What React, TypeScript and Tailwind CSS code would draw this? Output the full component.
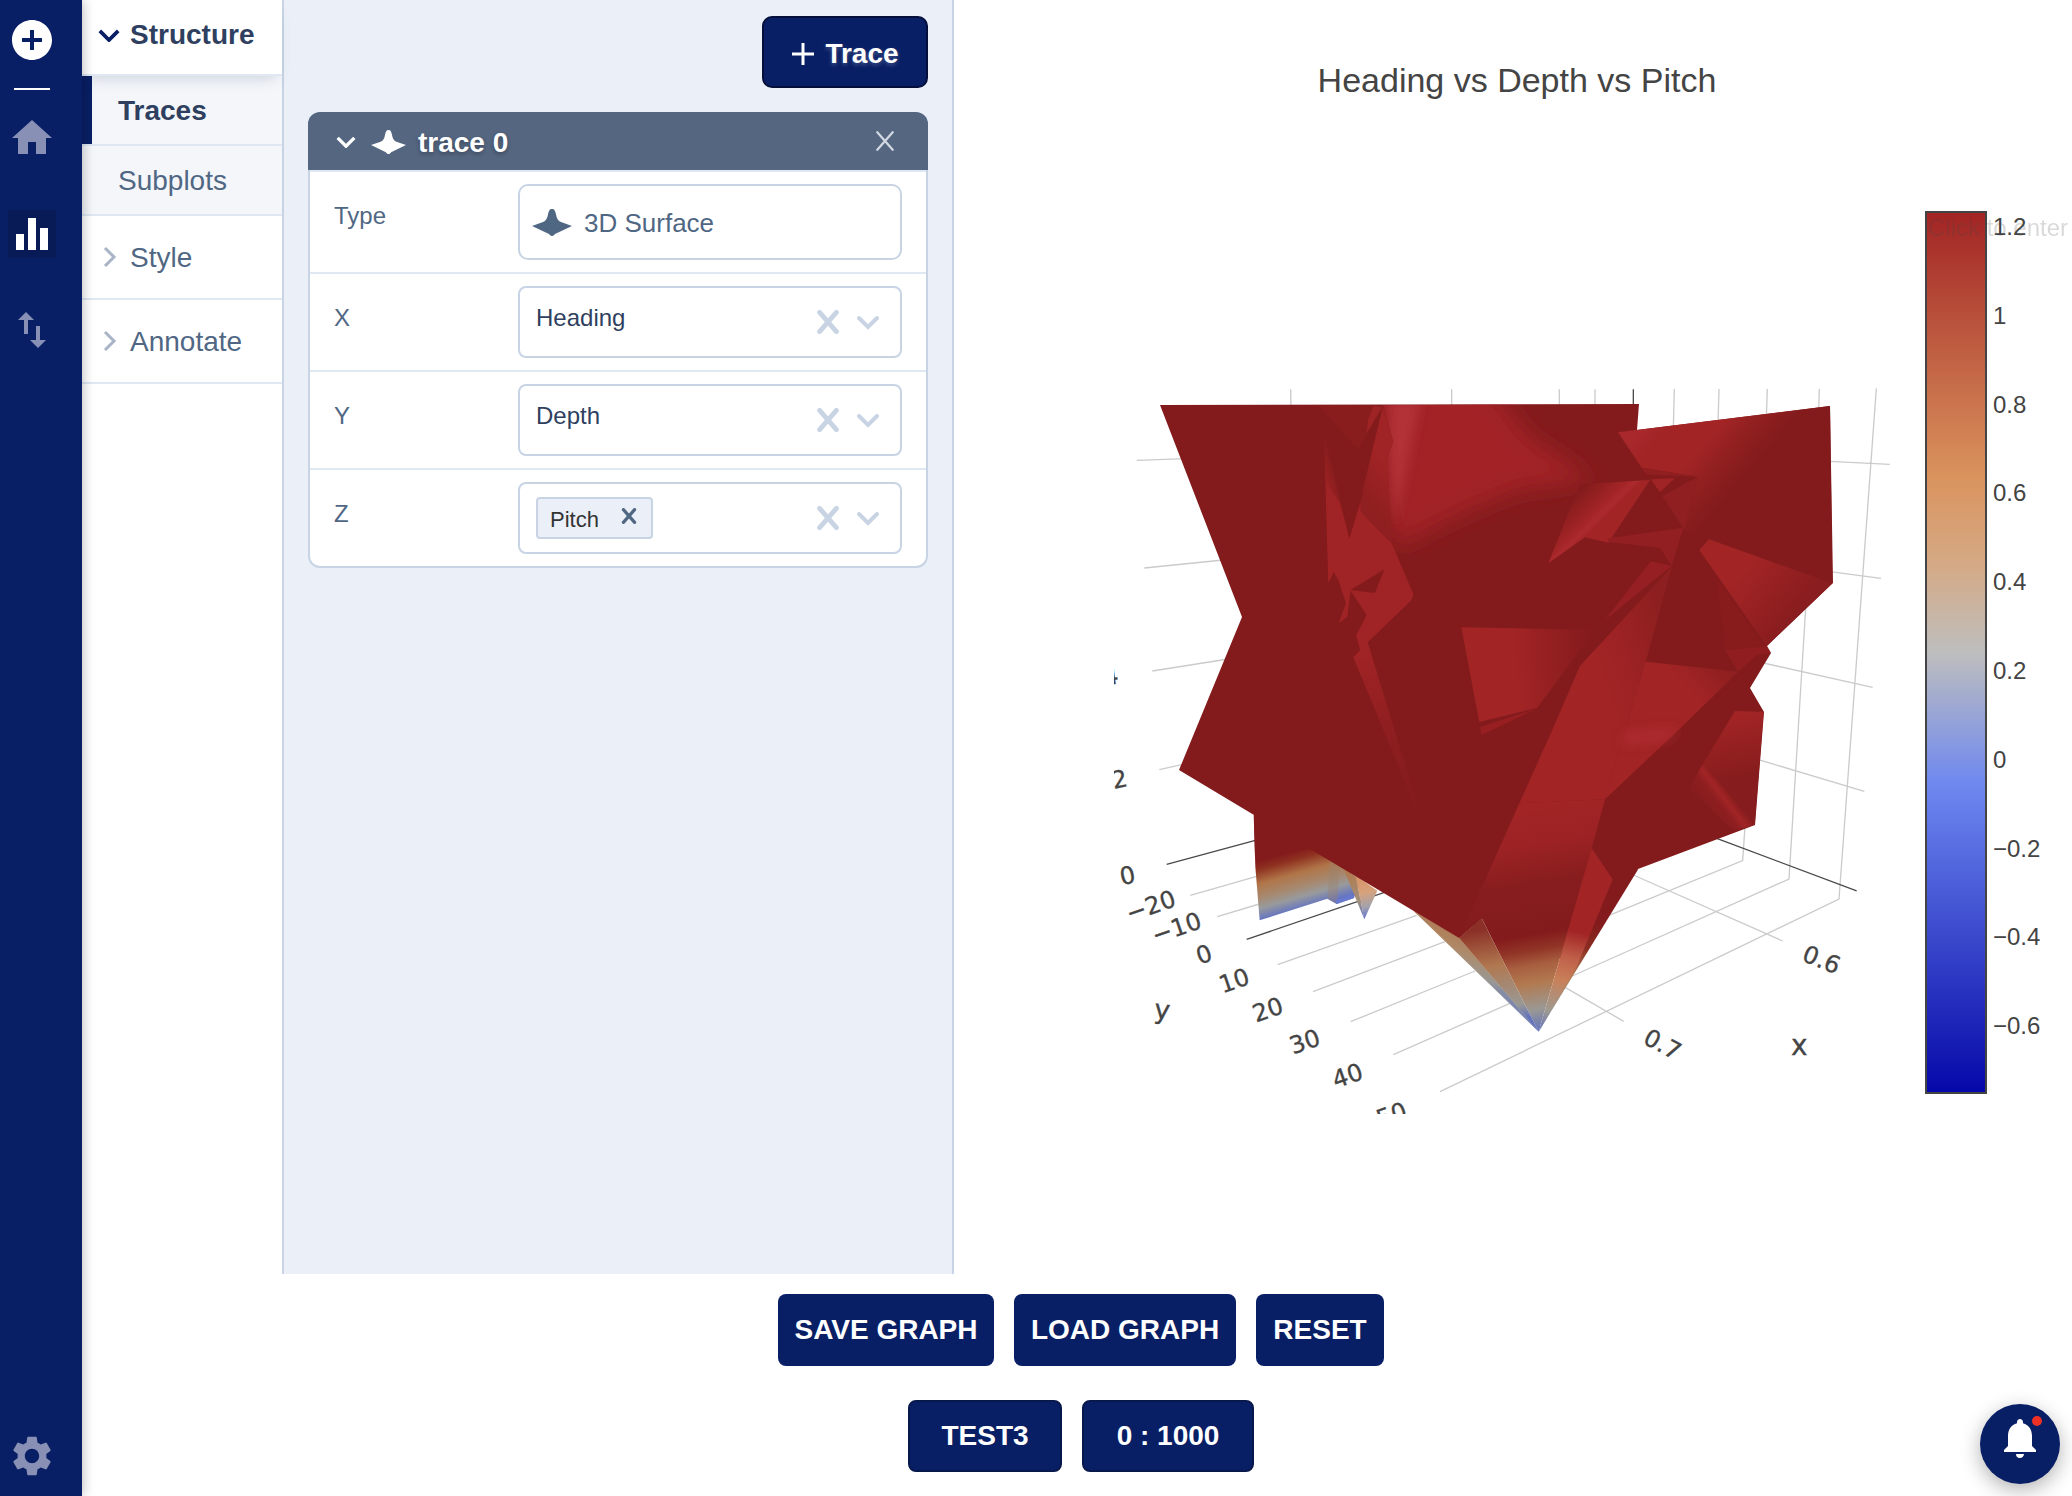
import React from "react";
import {
  MdAddCircle,
  MdHome,
  MdEqualizer,
  MdSwapVert,
  MdSettings,
  MdNotifications,
} from "react-icons/md";

const SURFACE_PATH =
  "M20 0C22.6 0 23.2 2.5 24 7C24.8 12 26 15 29 16.5L40 21.4L23 31.5C22 33 21.5 34 20 34C18.500 34 18 33 17 31.5L0 21.4L11 16.5C14 15 15.200 12 16 7C16.800 2.500 17.400 0 20 0Z";

function SurfaceIcon({ className }: { className: string }) {
  return (
    <svg viewBox="0 0 40 34" preserveAspectRatio="none" className={className} fill="currentColor" aria-hidden="true">
      <path d={SURFACE_PATH} />
    </svg>
  );
}

function Cross({ className, width }: { className: string; width: number }) {
  return (
    <svg viewBox="0 0 20 20" className={className} fill="none" stroke="currentColor" strokeWidth={width} strokeLinecap="round" aria-hidden="true">
      <path d="M3 2L17 18M17 2L3 18" />
    </svg>
  );
}

function Chevron({ className, width }: { className: string; width: number }) {
  return (
    <svg viewBox="0 0 24 14" className={className} fill="none" stroke="currentColor" strokeWidth={width} aria-hidden="true">
      <path d="M2 2L12 12L22 2" />
    </svg>
  );
}

function ChevronRight() {
  return (
    <svg viewBox="0 0 14 22" className="ml-[21px] mr-[13px] h-[22px] w-[14px] shrink-0 text-[#a9b4c6]" fill="none" stroke="currentColor" strokeWidth="3" aria-hidden="true">
      <path d="M2 2L11 11L2 20" />
    </svg>
  );
}

function Rail() {
  return (
    <nav className="relative z-10 flex w-[82px] shrink-0 flex-col bg-[#091f65] pl-2 pt-4 text-white shadow-[0_0_12px_rgba(0,0,0,0.3)]">
      <button type="button" aria-label="New" className="size-12"><MdAddCircle className="size-12" /></button>
      <hr className="ml-[6px] mt-6 h-[2px] w-9 border-0 bg-white" />
      <button type="button" aria-label="Home" className="mt-6 size-12 text-[#8890b5]"><MdHome className="size-12" /></button>
      <button type="button" aria-label="Charts" className="mt-12 size-12 bg-[#091b57]"><MdEqualizer className="size-12" /></button>
      <button type="button" aria-label="Transfer" className="mt-12 size-12 text-[#8890b5]"><MdSwapVert className="size-12" /></button>
      <button type="button" aria-label="Settings" className="mb-4 mt-auto size-12 text-[#8890b5]"><MdSettings className="size-12" /></button>
    </nav>
  );
}

function StructureMenu() {
  return (
    <div className="w-[202px] shrink-0 border-r-2 border-[#c8d4e3] bg-white text-[28px] text-[#506784]">
      <button type="button" className="relative flex h-[76px] w-full items-center border-b-2 border-[#dfe8f3] bg-white pb-1 font-bold text-[#2f3f60] shadow-[0_8px_14px_-6px_rgba(42,63,95,0.2)]">
        <Chevron width={4} className="ml-4 mr-[10px] h-[13px] w-[22px] text-[#091f65]" />
        <span>Structure</span>
      </button>
      <button type="button" className="flex h-[70px] w-full items-center border-b-2 border-[#dfe8f3] bg-[#f4f6fa] font-bold text-[#2f3f60]">
        <span className="h-full w-[10px] bg-[#091f65]" />
        <span className="ml-[26px] pt-[2px]">Traces</span>
      </button>
      <button type="button" className="flex h-[70px] w-full items-center border-b-2 border-[#dfe8f3] bg-[#f4f6fa] pl-9 pt-[2px]">Subplots</button>
      <button type="button" className="flex h-[84px] w-full items-center border-b-2 border-[#dfe8f3]"><ChevronRight /><span className="pt-[2px]">Style</span></button>
      <button type="button" className="flex h-[84px] w-full items-center border-b-2 border-[#dfe8f3]"><ChevronRight /><span className="pt-[2px]">Annotate</span></button>
    </div>
  );
}

function Row({ id, label, children }: { id: string; label: string; children: React.ReactNode }) {
  return (
    <div className="flex items-start border-t-2 border-[#dfe8f3] px-6 py-3">
      <label htmlFor={id} className="w-[184px] shrink-0 pt-4 text-2xl text-[#506784]">{label}</label>
      {children}
    </div>
  );
}

function Indicators({ label }: { label: string }) {
  return (
    <>
      <button type="button" aria-label={"Clear " + label} className="mr-4 shrink-0 text-[#c8d4e3]"><Cross width={4} className="size-6" /></button>
      <svg viewBox="0 0 26 16" className="pointer-events-none mr-[18px] h-4 w-[26px] shrink-0 text-[#c8d4e3]" fill="none" stroke="currentColor" strokeWidth="4" strokeLinecap="round" aria-hidden="true">
        <path d="M3 4L12 13L21 4" />
      </svg>
    </>
  );
}

function Picker({ id, value }: { id: string; value: string }) {
  return (
    <div className="flex h-[72px] min-w-0 flex-1 items-center rounded-lg border-2 border-[#c8d4e3] bg-white">
      <select id={id} defaultValue={value} className="h-full min-w-0 flex-1 appearance-none bg-transparent pb-2 pl-4 text-2xl text-[#2f3f60] outline-none">
        <option>{value}</option>
      </select>
      <Indicators label={value} />
    </div>
  );
}

function TracePanel() {
  return (
    <section className="w-[670px] shrink-0 border-r-2 border-[#c8d4e3] bg-[#ebf0f8] px-6 pt-4">
      <button type="button" className="ml-auto flex h-[72px] w-[166px] items-center justify-center gap-[10px] rounded-[10px] border-2 border-[#040f3c] bg-[#091f65] pt-1 text-[28px] font-bold text-white [text-shadow:0_2px_4px_rgba(255,255,255,0.25)]">
        <svg viewBox="0 0 24 24" className="size-6" stroke="currentColor" strokeWidth="3" aria-hidden="true"><path d="M1 12H23M12 1V23" /></svg>
        Trace
      </button>
      <div className="mt-6">
        <header className="flex h-[58px] items-center rounded-t-xl bg-[#546680] text-white [text-shadow:0_2px_4px_rgba(0,0,0,0.3)]">
          <Chevron width={4} className="ml-7 mt-[2px] h-[12px] w-5" />
          <SurfaceIcon className="ml-[15px] mt-[2px] h-6 w-[35px]" />
          <span className="ml-3 pt-1 text-[28px] font-bold">trace 0</span>
          <button type="button" aria-label="Remove trace 0" className="ml-auto mr-8 text-[#d3d9e2]"><Cross width={2} className="size-[22px]" /></button>
        </header>
        <div className="rounded-b-xl border-2 border-t-0 border-[#c8d4e3] bg-white">
          <Row id="type" label="Type">
            <button id="type" type="button" className="flex h-[76px] min-w-0 flex-1 items-center rounded-[10px] border-2 border-[#c8d4e3] bg-white pl-3 text-[26px] text-[#506784]">
              <SurfaceIcon className="mr-3 h-[27px] w-10" /><span className="pt-[2px]">3D Surface</span>
            </button>
          </Row>
          <Row id="x" label="X"><Picker id="x" value="Heading" /></Row>
          <Row id="y" label="Y"><Picker id="y" value="Depth" /></Row>
          <Row id="z" label="Z">
            <div className="flex h-[72px] min-w-0 flex-1 items-center rounded-lg border-2 border-[#c8d4e3] bg-white pl-4">
              <span className="flex h-[42px] shrink-0 items-center rounded-sm border-2 border-[#c8d4e3] bg-[#ebf0f8] pl-3 text-[22px] text-[#333]">
                <span className="pt-[2px]">Pitch</span>
                <button type="button" aria-label="Remove Pitch" className="ml-[22px] mr-[14px] text-[#506784]"><Cross width={4} className="mb-1 size-4" /></button>
              </span>
              <input id="z" type="text" className="h-full w-0 min-w-0 flex-1 bg-transparent text-2xl outline-none" />
              <Indicators label="Pitch" />
            </div>
          </Row>
        </div>
      </div>
    </section>
  );
}

/* Each tile below is drawn in its own 3x coordinate space. */
const TILE_A = "translate(1100 370) scale(0.33333)";
const TILE_B = "translate(1480 370) scale(0.33333)";
const TILE_C = "translate(1480 700) scale(0.33333)";
const TILE_D = "translate(1100 700) scale(0.33333)";

const DARK = "#831b1c";
const LIT = "#a22425";

type Stop = [number, string];

function Grad({ id, v, stops }: { id: string; v: [number, number, number, number]; stops: Stop[] }) {
  return (
    <linearGradient id={id} gradientUnits="userSpaceOnUse" x1={v[0]} y1={v[1]} x2={v[2]} y2={v[3]}>
      {stops.map(([o, c]) => <stop key={o} offset={o} stopColor={c} />)}
    </linearGradient>
  );
}

const yTicks: [string, number, number][] = [
  ["−20", 152, 617], ["−10", 229, 683], ["0", 312, 762], ["10", 402, 841],
  ["20", 503, 928], ["30", 614, 1024], ["40", 742, 1126], ["50", 874, 1243],
];

const barTicks = ["1.2", "1", "0.8", "0.6", "0.4", "0.2", "0", "−0.2", "−0.4", "−0.6"];

function TickText({ x, y, r, size = 72, children }: { x: number; y: number; r: number; size?: number; children: string }) {
  return (
    <text transform={`translate(${x} ${y}) rotate(${r})`} fontSize={size} textAnchor="middle" dy={size * 0.36} fill="#444" stroke="#444" strokeWidth="1">{children}</text>
  );
}

function Plot() {
  return (
    <svg viewBox="954 160 1118 1114" className="block w-full" role="img" aria-label="3D surface of heading, depth and pitch">
      <defs>
        <clipPath id="scene"><rect x="1114" y="160" width="790" height="954" /></clipPath>
        <clipPath id="backFace"><path d="M848 106L1617 102L1600 400L1400 600L876 545L862 260L880 215Z" /></clipPath>
        <filter id="soft" x="-20%" y="-20%" width="140%" height="140%"><feGaussianBlur stdDeviation="34" /></filter>
        <filter id="softer" x="-60%" y="-60%" width="220%" height="220%"><feGaussianBlur stdDeviation="16" /></filter>
        <linearGradient id="scale" x1="0" y1="0" x2="0" y2="1">
          <stop offset="0" stopColor="#a22424" />
          <stop offset="0.3" stopColor="#da935d" />
          <stop offset="0.4" stopColor="#d5aa85" />
          <stop offset="0.5" stopColor="#bebebe" />
          <stop offset="0.65" stopColor="#6e88f0" />
          <stop offset="1" stopColor="#0508a8" />
        </linearGradient>
        <Grad id="gBlade" v={[685, 400, 735, 385]} stops={[[0, LIT], [1, DARK]]} />
        <Grad id="gMid" v={[780, 380, 870, 300]} stops={[[0, "#8f1f20"], [1, "#a02325"]]} />
        <Grad id="gStrip" v={[800, 850, 960, 1330]} stops={[[0, "#a02325"], [0.5, "#8e1e20"], [1, DARK]]} />
        <Grad id="gSquare" v={[1250, 900, 1470, 890]} stops={[[0, LIT], [1, "#851b1d"]]} />
        <Grad id="gTop" v={[500, 160, 790, 410]} stops={[[0, "#a8282c"], [0.15, LIT], [0.45, LIT], [0.65, "#901f20"], [0.85, DARK], [1, DARK]]} />
        <Grad id="gDiag" v={[268, 390, 400, 525]} stops={[[0, DARK], [0.4, LIT], [0.52, "#ac2a2e"], [0.6, LIT], [1, LIT]]} />
        <Grad id="gCentre" v={[360, 900, 570, 830]} stops={[[0, LIT], [0.4, "#9c2224"], [1, "#8e1f20"]]} />
        <Grad id="gRight" v={[560, 1000, 700, 860]} stops={[[0, LIT], [0.4, LIT], [1, "#8f1f20"]]} />
        <Grad id="gEast" v={[750, 660, 900, 780]} stops={[[0, LIT], [1, "#8a1d1f"]]} />
        <Grad id="gFar" v={[627, 265, 750, 170]} stops={[[0, "#861c1d"], [0.28, "#8e1e20"], [0.42, LIT], [0.58, "#871c1d"], [1, "#951f21"]]} />
        <Grad id="gFarTop" v={[760, 50, 800, 230]} stops={[[0, LIT], [1, "#861c1d"]]} />
        <Grad id="gCone" v={[90, 340, 200, 990]} stops={[[0, LIT], [0.16, "#9c2224"], [0.34, "#871d1e"], [0.56, "#831b1c"], [0.63, "#913426"], [0.7, "#a85f40"], [0.78, "#b27a50"], [0.9, "#9a9894"], [1, "#6373bb"]]} />
        <Grad id="gConeEdge" v={[300, 500, 190, 995]} stops={[[0, LIT], [0.38, LIT], [0.54, "#c0604a"], [0.68, "#c88058"], [0.87, "#a09a90"], [1, "#6373bb"]]} />
        <Grad id="gConeRight" v={[390, 520, 180, 995]} stops={[[0, DARK], [0.3, DARK], [0.45, "#8a2c22"], [0.62, "#b07850"], [0.86, "#9a9894"], [1, "#6373bb"]]} />
        <Grad id="gConeLeft" v={[50, 680, 100, 960]} stops={[[0, "#8c3027"], [0.4, "#b07850"], [0.85, "#9a9894"], [1, "#6373bb"]]} />
        <Grad id="gConeUnder" v={[20, 720, -30, 830]} stops={[[0, "#a96c49"], [0.5, "#b18660"], [0.9, "#9a9894"], [1, "#7d88aa"]]} />
        <Grad id="gConeBlue" v={[-100, 700, 176, 995]} stops={[[0, "#b28a66"], [0.5, "#9a9894"], [0.8, "#7c86b0"], [1, "#6373bb"]]} />
        <Grad id="gWest" v={[485, 480, 533, 650]} stops={[[0, DARK], [0.14, "#8e3020"], [0.38, "#b07548"], [0.62, "#a68a72"], [0.78, "#989a9c"], [1, "#5f70c6"]]} />
        <Grad id="gSpike" v={[760, 520, 793, 658]} stops={[[0, "#d98f60"], [0.45, "#d7a27c"], [0.75, "#a3a3ac"], [1, "#5f70d0"]]} />
        <Grad id="gSpikeLeft" v={[750, 520, 793, 658]} stops={[[0, "#b07a50"], [0.6, "#a3917c"], [1, "#5f70d0"]]} />
      </defs>

      <g clipPath="url(#scene)" fontFamily='"DejaVu Sans", Verdana, sans-serif'>
        <g fill="none" stroke="#cbcbcb" strokeWidth="4">
          <path transform={TILE_A} d="M110 271L260 266M133 594L370 570M157 903L385 867M572 58L573 110M1055 58V110" />
          <path transform={TILE_B} d="M238 58V105M345 58V105M583 57L580 175M717 57L714 160M862 57L859 140M1018 57L1016 120M1189 55L1121 990M1050 274L1229 283M1050 605L1203 625M850 879L1178 952M978 700L960 990" />
          <path transform={TILE_C} d="M960 0L927 537L270 831M1121 0L1077 597L-120 1175M795 380L788 482L380 649M835 179L1153 274M460 525L908 723M255 862L431 964M-260 1064L90 910" />
          <path transform={TILE_D} d="M178 209L245 194M271 586L470 529M352 650L478 612M533 794L950 646M639 875L1035 725M752 965L1125 813" />
        </g>
        <g fill="none" stroke="#4a4a4a" strokeWidth="4">
          <path transform={TILE_B} d="M460 58V110" />
          <path transform={TILE_C} d="M710 415L1130 573" />
          <path transform={TILE_D} d="M200 493L466 421M440 718L860 575" />
        </g>

        <g transform={TILE_D}>
          <path d="M461 345L466 500L479 661L682 596L710 612L762 594L780 540L640 440Z" fill="url(#gWest)" />
          <path d="M690 484L718 500L712 612L682 596Z" fill="#98826f" opacity="0.4" />
          <path d="M710 612L762 594L758 583L706 600Z" fill="#6878cc" />
          <path d="M728 500L768 530L793 658Z" fill="url(#gSpikeLeft)" />
          <path d="M766 525L832 572L793 658Z" fill="url(#gSpike)" />
        </g>
        <g transform={TILE_C}>
          <path d="M-200 632L-62 714L176 995Z" fill="url(#gConeBlue)" />
          <path d="M-200 632L-40 700L176 995L-50 770Z" fill="url(#gConeUnder)" opacity="0.6" />
        </g>
        <path
          d="M1160 405L1242 617L1179 770L1254 815L1255 855L1310 849L1459 938L1540 870L1560 960L1638 869L1755 825L1764 712L1750 688L1771 653L1767 646L1833 583L1830 406L1637 430L1639 404Z"
          fill={DARK}
        />

        <g transform={TILE_A}>
          <path d="M655 106L822 106L802 190L775 240Z" fill="#891d1e" />
          <path d="M820 108L848 110L800 190L804 150Z" fill="#9e2324" />
          <g clipPath="url(#backFace)">
            <path d="M820 20L1150 20L1290 200L1480 330L1260 360L1100 425L885 535L840 300Z" fill={LIT} filter="url(#soft)" />
            <path d="M870 90L960 90L885 470L868 260Z" fill="#b23237" filter="url(#softer)" />
          </g>
          <path d="M848 112L880 215L862 260L876 522L780 425L783 385Z" fill="url(#gMid)" />
          <path d="M672 190L748 505L685 640Z" fill="url(#gBlade)" />
          <path d="M680 340L720 400L748 505L782 390V425L876 522L940 672L935 690L803 817L782 843L768 797L800 735L752 662L742 740L716 760L738 700L715 630L685 578Z" fill="#a02325" />
          <path d="M700 250L748 505L790 370L775 230Z" fill={DARK} opacity="0.6" />
          <path d="M752 660L853 598L825 669Z" fill={DARK} />
          <path d="M760 862L803 817L975 1380Z" fill="url(#gStrip)" />
          <path d="M1084 772L1485 780L1312 1013L1138 1056Z" fill="url(#gSquare)" />
          <path d="M1140 1071L1312 1015L1145 1095Z" fill="#971f22" />
        </g>

        <g transform={TILE_B}>
          <path d="M414 187L1050 108L1057 640L613 480L653 320L485 293Z" fill="url(#gTop)" />
          <path d="M485 293L653 320L500 314Z" fill="#8f1f20" />
          <path d="M300 343L510 330L385 518L315 502L205 580Z" fill="url(#gDiag)" />
          <path d="M512 328L585 324L540 367Z" fill="#a02325" />
          <path d="M653 320L613 480L547 378Z" fill="#8f1f20" />
          <path d="M385 505L610 473L575 588L540 533L385 516Z" fill="#921f21" />
          <path d="M512 574L575 588L375 750Z" fill="#951f22" />
          <path d="M575 590L497 875L375 1288L118 1300L217 1080L300 888Z" fill="url(#gCentre)" />
          <path d="M497 875L775 905L595 1080L375 1288Z" fill="url(#gRight)" />
          <path d="M440 1085L600 1075L555 1115L420 1125Z" fill="#b02d32" filter="url(#softer)" opacity="0.8" />
          <path d="M658 540L687 508L1057 640L860 828Z" fill="url(#gEast)" />
          <path d="M710 620L850 828L735 840Z" fill="#881c1d" />
          <path d="M735 840L860 829L872 848L830 855L775 905Z" fill="#901e20" />
        </g>

        <g transform={TILE_C}>
          <path d="M765 33L851 35L824 374L670 190Z" fill="url(#gFarTop)" />
          <path d="M670 190L824 374L760 392L627 265Z" fill="url(#gFar)" />
          <path d="M118 310L375 298L335 445L176 995L5 655L-62 714Z" fill="url(#gCone)" />
          <path d="M-62 714L5 655L176 995Z" fill="url(#gConeLeft)" />
          <path d="M398 538L475 507L176 995Z" fill="url(#gConeRight)" />
          <path d="M335 445L398 538L290 800L176 995Z" fill="url(#gConeEdge)" />
        </g>

        <g transform={TILE_D}>
          <TickText x={58} y={237} r={-12}>2</TickText>
          <TickText x={82} y={526} r={-12}>0</TickText>
          {yTicks.map(([t, x, y], i) => <TickText key={i} x={x} y={y} r={-19}>{t}</TickText>)}
          <TickText x={187} y={928} r={6} size={80}>y</TickText>
        </g>
        <g transform={TILE_A}><TickText x={32} y={918} r={-8}>4</TickText></g>
        <g transform={TILE_C}>
          <TickText x={1025} y={778} r={22}>0.6</TickText>
          <TickText x={548} y={1032} r={28}>0.7</TickText>
          <TickText x={958} y={1034} r={0} size={84}>x</TickText>
        </g>
      </g>

      <g fontFamily='"Liberation Sans", Arial, sans-serif' fontSize="24" fill="#444">
        <rect x="1926" y="212" width="60" height="881" fill="url(#scale)" stroke="#444" strokeWidth="2" />
        <text x="1928" y="236" opacity="0.2">Click to enter</text>
        {barTicks.map((t, i) => <text key={t} x="1993" y={235 + Math.round(i * 88.8)}>{t}</text>)}
      </g>
    </svg>
  );
}

const solid = "h-[72px] rounded-lg bg-[#091f65] text-[28px] font-bold text-white";

export default function App() {
  return (
    <div className="flex min-h-screen bg-white font-['Liberation_Sans',Arial,sans-serif]">
      <Rail />
      <main className="flex min-w-0 flex-1 flex-col">
        <div className="flex flex-1">
          <StructureMenu />
          <TracePanel />
          <figure className="min-w-0 flex-1">
            <figcaption className="h-40 pl-2 pt-[60px] text-center text-[34px] leading-10 text-[#444]">Heading vs Depth vs Pitch</figcaption>
            <Plot />
          </figure>
        </div>
        <footer className="flex flex-col items-center gap-[34px] pb-6 pl-2 pt-5">
          <div className="flex gap-5">
            <button type="button" className={solid + " w-[216px]"}>SAVE GRAPH</button>
            <button type="button" className={solid + " w-[222px]"}>LOAD GRAPH</button>
            <button type="button" className={solid + " w-[128px]"}>RESET</button>
          </div>
          <div className="flex gap-5">
            <button type="button" className={solid + " w-[154px] border-2 border-[#07184a]"}>TEST3</button>
            <button type="button" className={solid + " w-[172px] border-2 border-[#07184a]"}>0 : 1000</button>
          </div>
        </footer>
      </main>
      <button type="button" aria-label="Notifications" className="fixed bottom-3 right-3 flex size-20 justify-center rounded-full bg-[#091f65] pt-[10px] text-white shadow-[0_6px_20px_rgba(0,0,0,0.3)]">
        <MdNotifications className="size-12" />
        <span className="absolute right-[18px] top-3 size-[10px] rounded-full bg-[#ee3124]" />
      </button>
    </div>
  );
}
